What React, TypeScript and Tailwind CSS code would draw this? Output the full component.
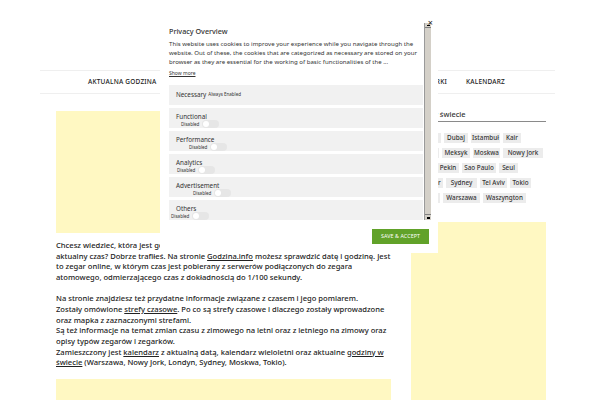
import React from "react";

const FONT = { fontFamily: '"Noto Sans", "Open Sans", Arial, sans-serif' };

type Tag = { t: string; w: number };
const tagRows: Tag[][] = [
  [{ t: "Berlin", w: 30 }, { t: "Dubaj", w: 24 }, { t: "Istambuł", w: 29 }, { t: "Kair", w: 18 }],
  [{ t: "Londyn", w: 28 }, { t: "Meksyk", w: 28 }, { t: "Moskwa", w: 27 }, { t: "Nowy Jork", w: 40 }],
  [{ t: "Paryż", w: 23 }, { t: "Pekin", w: 22 }, { t: "Sao Paulo", w: 34 }, { t: "Seul", w: 19 }],
  [{ t: "Singapur", w: 32 }, { t: "Sydney", w: 31 }, { t: "Tel Aviv", w: 27 }, { t: "Tokio", w: 21 }],
  [{ t: "Toronto", w: 29 }, { t: "Warszawa", w: 37 }, { t: "Waszyngton", w: 43 }],
];

type Cat = { label: string; ml: number };
const cats: Cat[] = [
  { label: "Functional", ml: 5 },
  { label: "Performance", ml: 13 },
  { label: "Analytics", ml: 1 },
  { label: "Advertisement", ml: 17 },
  { label: "Others", ml: -5 },
];

function Toggle() {
  return (
    <div className="ml-[3px] w-[17px] h-[8px] rounded-full bg-[#e6e6e6] flex items-center pl-[1px]">
      <div className="w-[6px] h-[6px] rounded-full bg-white" />
    </div>
  );
}

export default function App() {
  return (
    <div className="relative w-[600px] h-[400px] overflow-hidden bg-white text-[#222]" style={FONT}>
      {/* nav */}
      <div className="pt-[70px]">
        <div className="ml-[40px] w-[515px] h-[24px] border-y border-[#efefef] flex items-center justify-between pl-[48px] pr-[50px] text-[6.5px] tracking-[0.2px] text-[#222] uppercase font-medium">
          <div className="flex gap-[19px]">
            <span>Aktualna godzina</span>
            <span>Strefy czasowe</span>
          </div>
          <div className="flex gap-[19px]">
            <span>Zmiana czasu</span>
            <span>Zegary i zegarki</span>
            <span>Kalendarz</span>
          </div>
        </div>
      </div>

      {/* main */}
      <div className="flex pl-[56px]">
        <div className="w-[345px] pt-[17px]">
          <div className="w-[335px] h-[122px] bg-[#fff8c2]" />
          <div className="mt-[7px] text-[7.6px] leading-[10.65px] text-[#222] font-medium whitespace-nowrap">
            <p>
              Chcesz wiedzieć, która jest godzina? Jaki jest
              <br />
              aktualny czas? Dobrze trafiłeś. Na stronie <span className="underline">Godzina.info</span> możesz sprawdzić datę i godzinę. Jest
              <br />
              to zegar online, w którym czas jest pobierany z serwerów podłączonych do zegara
              <br />
              atomowego, odmierzającego czas z dokładnością do 1/100 sekundy.
            </p>
            <p className="mt-[10.65px]">
              Na stronie znajdziesz też przydatne informacje związane z czasem i jego pomiarem.
              <br />
              Zostały omówione <span className="underline">strefy czasowe</span>. Po co są strefy czasowe i dlaczego zostały wprowadzone
              <br />
              oraz mapka z zaznaczonymi strefami.
              <br />
              Są też informacje na temat zmian czasu z zimowego na letni oraz z letniego na zimowy oraz
              <br />
              opisy typów zegarów i zegarków.
              <br />
              Zamieszczony jest <span className="underline">kalendarz</span> z aktualną datą, kalendarz wieloletni oraz aktualne <span className="underline">godziny w</span>
              <br />
              <span className="underline">świecie</span> (Warszawa, Nowy Jork, Londyn, Sydney, Moskwa, Tokio).
            </p>
          </div>
          <div className="mt-[11px] w-[335px] h-[40px] bg-[#fff8c2]" />
        </div>

        {/* sidebar */}
        <div className="ml-[10px] w-[135px] pt-[15px]">
          <div className="h-[13px] border-b border-[#8a8a8a] pl-[3px] text-[7.4px] leading-[11px] text-[#333] font-medium whitespace-nowrap">Czas w świecie</div>
          <div className="mt-[11px] flex flex-col gap-[5px]">
            {tagRows.map((row, i) => (
              <div key={i} className="flex gap-[3px]">
                {row.map((tag) => (
                  <div
                    key={tag.t}
                    className="h-[10px] bg-[#ececec] flex items-center justify-center text-[6.3px] text-[#333] font-medium whitespace-nowrap"
                    style={{ width: tag.w }}
                  >
                    {tag.t}
                  </div>
                ))}
              </div>
            ))}
          </div>
          <div className="mt-[19px] w-[135px] h-[200px] bg-[#fff8c2]" />
        </div>
      </div>

      {/* cookie modal */}
      <div className="absolute left-[160px] top-[15px] w-[278px] h-[238px] bg-white flex flex-col text-[#333]">
        <div className="relative mt-[8px] h-[197px] flex">
          <div className="flex-1 overflow-hidden pl-[9px] pr-[1px]">
            <div className="text-[7.2px] leading-[10px] mt-[3px] text-[#333] font-medium">Privacy Overview</div>
            <div className="mt-[3px] text-[6.1px] leading-[9.2px] text-[#333]">
              This website uses cookies to improve your experience while you navigate through the website. Out of these, the cookies that are categorized as necessary are stored on your browser as they are essential for the working of basic functionalities of the ...
            </div>
            <div className="mt-[3px] text-[5px] leading-[7px] underline text-[#333]">Show more</div>
            <div className="mt-[8px] flex flex-col gap-[3px]">
              <div className="h-[20px] bg-[#f1f1f1] flex items-center pl-[7px]">
                <span className="text-[6.3px]">Necessary</span>
                <span className="ml-[2px] text-[4.5px]">Always Enabled</span>
              </div>
              {cats.map((c) => (
                <div key={c.label} className="h-[20px] bg-[#f1f1f1] pl-[7px] pt-[6px] flex flex-col">
                  <span className="text-[6.3px] leading-[6.5px]">{c.label}</span>
                  <div className="flex items-center" style={{ marginLeft: c.ml }}>
                    <span className="text-[4.5px] leading-[6px]">Disabled</span>
                    <Toggle />
                  </div>
                </div>
              ))}
            </div>
          </div>
          {/* scrollbar */}
          <div className="w-[7px] mr-[7px] flex flex-col bg-[#e2e0da] border-l border-[#9a9a9a]">
            <div className="h-[5px] bg-[#d4d0c8] border-b border-[#808080] flex items-center justify-center">
              <div className="w-[3px] h-[1px] bg-black" />
            </div>
            <div className="flex-1 bg-[#d4d0c8]" />
            <div className="h-[6px] bg-[#d4d0c8] border-t border-[#808080] flex items-center justify-center">
              <div className="w-[3px] h-[2px] bg-black" />
            </div>
          </div>
          <div className="absolute right-[5px] top-[-5px] text-[9px] leading-[9px] text-[#222]">×</div>
        </div>
        <div className="flex justify-end pr-[9px] mt-[9px]">
          <div className="w-[57px] h-[15px] bg-[#61a229] flex items-center justify-center text-white text-[5.3px] tracking-[0.1px]">
            SAVE &amp; ACCEPT
          </div>
        </div>
      </div>
    </div>
  );
}
